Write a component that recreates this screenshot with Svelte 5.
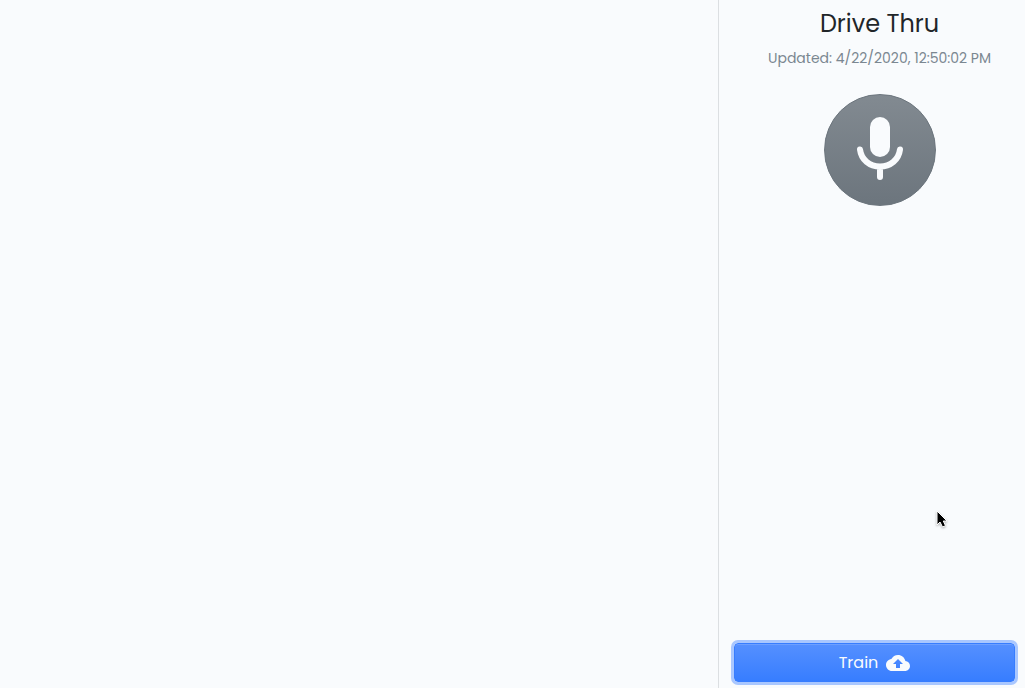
<script lang="ts">
  let name = 'Drive Thru';
  let updated = '4/22/2020, 12:50:02 PM';
</script>

<div class="layout">
  <main class="conversation"></main>

  <aside class="sidebar">
    <header>
      <h1>{name}</h1>
      <p class="updated">Updated: {updated}</p>
    </header>

    <button class="mic" type="button" aria-label="Record">
      <svg viewBox="0 0 112 112" aria-hidden="true">
        <rect x="46" y="23" width="20" height="40" rx="10" fill="currentColor" />
        <path
          d="M36 55.5c1.3 10.3 9.6 17 20 17s18.700-6.700 20-17M56 73v10"
          fill="none"
          stroke="currentColor"
          stroke-width="6"
          stroke-linecap="round"
        />
      </svg>
    </button>

    <button class="train" type="button">
      <span>Train</span>
      <svg viewBox="0 0 24 24" aria-hidden="true">
        <path
          fill="currentColor"
          d="M19.350 10.040C18.670 6.590 15.640 4 12 4 9.110 4 6.600 5.640 5.350 8.040 2.340 8.360 0 10.910 0 14c0 3.310 2.690 6 6 6h13c2.760 0 5-2.240 5-5 0-2.640-2.050-4.780-4.650-4.960zM14 13v4h-4v-4H7l5-5 5 5h-3z"
        />
      </svg>
    </button>
  </aside>

  <svg class="pointer" viewBox="0 0 12 18" aria-hidden="true">
    <path
      d="M1 1v14l3-3 2.500 5 3-1.300-2.200-4.700H11z"
      fill="#000"
      stroke="#fff"
      stroke-width="1"
    />
  </svg>
</div>

<style>
  :global(body) {
    margin: 0;
    background: #f9fbfd;
  }

  .layout {
    position: relative;
    display: grid;
    grid-template-columns: 1fr 307px;
    min-height: 100vh;
    color: #212529;
    font-family: Poppins, Inter, "Open Sans", sans-serif;
  }

  .sidebar {
    display: flex;
    flex-direction: column;
    align-items: center;
    box-sizing: border-box;
    padding: 8px 0 6px 15px;
    border-left: 1px solid #dcdfe2;
  }

  header {
    text-align: center;
  }

  h1 {
    margin: 0;
    font-size: 24px;
    font-weight: 400;
    line-height: 32px;
  }

  .updated {
    margin: 6px 0 24px;
    color: #7b8791;
    font-size: 14px;
    line-height: 24px;
  }

  button {
    font-family: inherit;
    cursor: pointer;
  }

  .mic {
    width: 112px;
    height: 112px;
    padding: 0;
    border: 1px solid #6c757d;
    border-radius: 50%;
    background: linear-gradient(#828a91, #6c757d);
    color: #f9fbfd;
  }

  .mic svg {
    display: block;
    width: 112px;
    height: 112px;
    margin: -1px;
  }

  .train {
    display: flex;
    align-items: center;
    justify-content: center;
    gap: 8px;
    align-self: stretch;
    height: 39px;
    margin: auto 10px 0 0;
    padding: 0 12px;
    border: 1px solid #377dff;
    border-radius: 4px;
    background: linear-gradient(#5590ff, #377dff);
    box-shadow: inset 0 1px 0 rgba(255, 255, 255, 0.15), 0 0 0 3px #a9c7ff;
    color: #f9fbfd;
    font-size: 16px;
    line-height: 24px;
  }

  .train svg {
    width: 24px;
    height: 24px;
  }

  .pointer {
    position: absolute;
    top: 510px;
    left: 936px;
    width: 12px;
    height: 18px;
    filter: drop-shadow(0 1px 1px rgba(0, 0, 0, 0.3));
    pointer-events: none;
  }
</style>
